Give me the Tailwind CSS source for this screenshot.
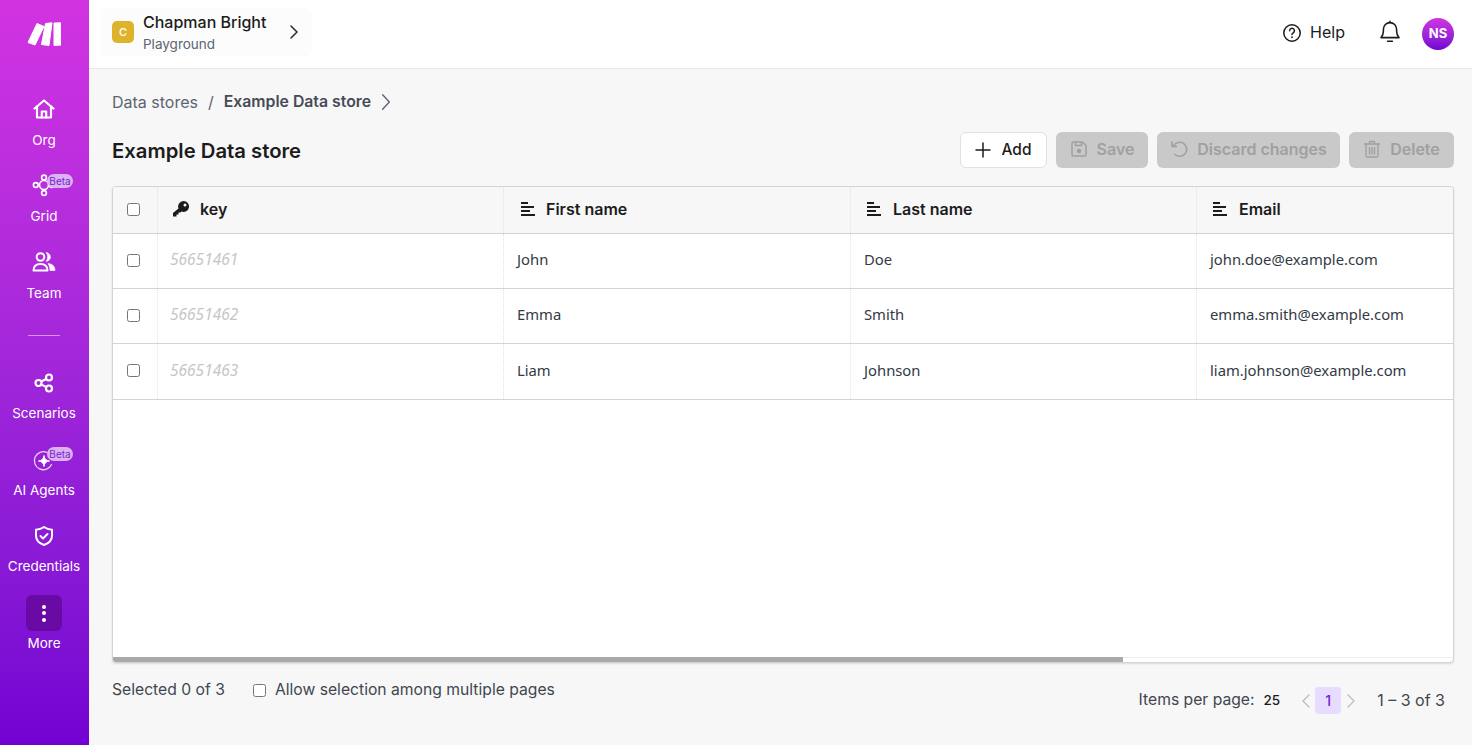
<!DOCTYPE html>
<html lang="en">
<head>
    <meta charset="UTF-8">
    <title>Example Data store</title>
    <script src="https://cdn.jsdelivr.net/npm/@tailwindcss/browser@4"></script>
</head>
<body class="font-['Inter',sans-serif] bg-[#f7f7f7] text-[#1c1c1c] h-[745px] w-[1472px] overflow-hidden">
<div class="flex h-[745px]">
    <!-- Sidebar -->
    <aside class="w-[89px] shrink-0 pr-px bg-gradient-to-b from-[#d233e1] to-[#7300d1] text-white text-[13.5px] flex flex-col items-stretch">
        <div class="h-[91.5px] flex justify-center pt-[22px]">
            <svg width="34" height="24" viewBox="0 0 34 24" fill="#fff" stroke="#fff" stroke-width="1" stroke-linejoin="round">
                <polygon points="1,20.5 10,1.5 17,4.5 8,23" />
                <polygon points="14.5,22.5 18.5,1.5 25,0.8 22,23.5" />
                <polygon points="27,1 33.5,0.8 34,23 27,23.5" />
            </svg>
        </div>
        <a class="h-[76.5px] pt-[5px] flex flex-col items-center">
            <svg class="w-6 h-6" viewBox="0 0 24 24" fill="none" stroke="#fff" stroke-width="2.200" stroke-linejoin="round" stroke-linecap="round"><path d="M2.500 11.500 12 3.500l9.500 8" /><path d="M5 9.500V20.500h14V9.500" /><path d="M9.800 20.500v-6h4.400v6" /></svg>
            <span class="mt-[9px] leading-5">Org</span>
        </a>
        <a class="relative h-[76.5px] pt-[5px] flex flex-col items-center">
            <svg class="w-6 h-6" viewBox="0 0 24 24" fill="none" stroke="#fff" stroke-width="1.600"><circle cx="12" cy="12" r="4.500" /><circle cx="12" cy="4.500" r="2.400" /><circle cx="3.800" cy="12" r="2.400" /><circle cx="12" cy="20" r="2.400" /><circle cx="20" cy="12" r="2.400" /></svg>
            <span class="absolute left-[47px] top-[6px] h-[14px] w-[26px] rounded-full bg-[#dcb2f0] text-[#7a22d0] text-[10px] leading-[14px] text-center">Beta</span>
            <span class="mt-[9px] leading-5">Grid</span>
        </a>
        <a class="h-[76.5px] pt-[5px] flex flex-col items-center">
            <svg class="w-6 h-6" viewBox="0 0 24 24" fill="none"><circle cx="8.500" cy="7" r="3.800" stroke="#fff" stroke-width="2" /><path d="M14 2.600a4.400 4.400 0 0 1 0 8.800 6.500 6.500 0 0 0 0-8.800z" fill="#fff" stroke="#fff" stroke-width=".6" /><path d="M1.500 20.500c0-4.300 3-6.500 7-6.500s7 2.200 7 6.500z" stroke="#fff" stroke-width="2" stroke-linejoin="round" /><path d="M16 13.500c4.300.3 7 2.900 7 7h-5c0-2.800-.8-5.100-2-7z" fill="#fff" stroke="#fff" stroke-width=".6" stroke-linejoin="round" /></svg>
            <span class="mt-[9px] leading-5">Team</span>
        </a>
        <div class="h-[44.5px] pt-[13.5px] flex justify-center"><div class="w-8 h-px bg-white/50"></div></div>
        <a class="h-[76.5px] pt-[5px] flex flex-col items-center">
            <svg class="w-6 h-6" viewBox="0 0 24 24" fill="none" stroke="#fff" stroke-width="2.200"><circle cx="6.500" cy="12" r="3" /><circle cx="17" cy="6.500" r="3" /><circle cx="17" cy="17.500" r="3" /><path d="M9.200 10.600 14.300 8M9.200 13.400l5.100 2.700" /></svg>
            <span class="mt-[8px] leading-5">Scenarios</span>
        </a>
        <a class="relative h-[76.5px] pt-[5px] flex flex-col items-center">
            <svg class="w-6 h-6 mt-[1.500px]" viewBox="0 0 24 24" fill="none"><path d="M19.500 15.500A9 9 0 1 1 15 3.500" stroke="#fff" stroke-opacity=".8" stroke-width="1.300" stroke-linecap="round" /><path d="M12 6.500c.5 3.500 2 5 5.500 5.500-3.500.5-5 2-5.500 5.500-.5-3.500-2-5-5.500-5.500 3.500-.5 5-2 5.500-5.500z" fill="#fff" stroke="#fff" stroke-linejoin="round" /></svg>
            <span class="absolute left-[47px] top-[5px] h-[14px] w-[26px] rounded-full bg-[#dcb2f0] text-[#7a22d0] text-[10px] leading-[14px] text-center">Beta</span>
            <span class="mt-[7.500px] leading-5">AI Agents</span>
        </a>
        <a class="h-[76.5px] pt-[5px] flex flex-col items-center">
            <svg class="w-6 h-6" viewBox="0 0 24 24" fill="none" stroke="#fff" stroke-width="2" stroke-linejoin="round" stroke-linecap="round"><path d="M12 3c2.500 1.800 5 2.500 8 2.700v6c0 4.500-3 7.500-8 9.300-5-1.800-8-4.800-8-9.300v-6C7 5.500 9.500 4.800 12 3z" /><path d="m8.500 12 2.500 2.500 4.500-4.500" /></svg>
            <span class="mt-[8px] leading-5">Credentials</span>
        </a>
        <a class="flex flex-col items-center">
            <div class="w-9 h-9 rounded-md bg-[#6a0aa5] flex flex-col items-center justify-center gap-[2.500px]">
                <span class="w-1 h-1 rounded-full bg-white"></span>
                <span class="w-1 h-1 rounded-full bg-white"></span>
                <span class="w-1 h-1 rounded-full bg-white"></span>
            </div>
            <span class="mt-[2px] leading-5">More</span>
        </a>
    </aside>

    <div class="flex-1 min-w-0 flex flex-col">
        <!-- Top bar -->
        <header class="h-[69px] shrink-0 bg-white border-b border-[#e8e9ec] flex items-center justify-between pl-[11px] pr-[18px]">
            <div class="h-[48px] w-[212px] rounded-md bg-[#fcfcfc] flex items-center pl-[12px] relative -top-[2px]">
                <div class="w-[22px] h-[22px] rounded-[5px] bg-[#dfb22c] text-white text-[11px] font-medium flex items-center justify-center">C</div>
                <div class="ml-[9px] w-[143px] pt-[1px]">
                    <div class="text-[16px] font-medium leading-5">Chapman Bright</div>
                    <div class="text-[13.500px] text-[#5b6472] leading-5 mt-[2px]">Playground</div>
                </div>
                <svg class="w-4 h-4" viewBox="0 0 16 16" fill="none" stroke="#1f2937" stroke-width="1.500" stroke-linecap="round" stroke-linejoin="round"><path d="m5 2 6 6-6 6" /></svg>
            </div>
            <div class="flex items-center">
                <svg class="w-[20px] h-[20px] -mt-[3px]" viewBox="0 0 20 20" fill="none" stroke="#1c1c1c" stroke-width="1.500" stroke-linecap="round"><circle cx="10" cy="10" r="8.200" /><path d="M7.600 7.800a2.400 2.400 0 1 1 3.700 2c-.8.500-1.300.9-1.300 1.800" /><path d="M10 14.200v.1" stroke-width="1.800" /></svg>
                <span class="ml-[8px] -mt-[4px] text-[16px] text-[#1c1c1c]">Help</span>
                <svg class="ml-[33px] -mt-[6px] w-6 h-6" viewBox="0 0 20 20" fill="none" stroke="#1c1c1c" stroke-width="1.300" stroke-linejoin="round" stroke-linecap="round"><path d="M2.500 15.500c1.500-1.500 2-3 2-5.500v-1.500a5.500 5.500 0 0 1 11 0V10c0 2.500.5 4 2 5.500z" /><path d="M8 18.500h4" /><path d="M10 2v1" /></svg>
                <div class="ml-[20px] w-8 h-8 rounded-full bg-gradient-to-b from-[#d233e1] to-[#7300d1] text-white text-[13px] font-bold flex items-center justify-center">NS</div>
            </div>
        </header>

        <!-- Content -->
        <main class="flex-1 min-h-0 pl-[23px] pr-[18px] flex flex-col">
            <nav class="h-[20px] mt-[23px] flex items-center text-[16px] text-[#5b6472]">
                <span>Data stores</span>
                <span class="mx-[10px]">/</span>
                <span class="text-[15.800px] font-semibold text-[#454b54]">Example Data store</span>
                <svg class="ml-[6px] w-[18px] h-[18px]" viewBox="0 0 16 16" fill="none" stroke="#5b6472" stroke-width="1.200" stroke-linecap="round" stroke-linejoin="round"><path d="m5 1.500 6 6.500-6 6.500" /></svg>
            </nav>
            <div class="mt-[20px] h-[54px] flex items-start justify-between">
                <h1 class="text-[20.300px] font-semibold leading-[38px] text-[#1c1c1c]">Example Data store</h1>
                <div class="flex items-center gap-[9px] h-9">
                    <button class="h-9 w-[87px] pb-px rounded-md bg-white border border-[#dfe1e5] flex items-center justify-center text-[15.500px] font-medium text-[#1c1c1c]">
                        <svg class="w-4 h-4 mr-[10px]" viewBox="0 0 16 16" fill="none" stroke="#1c1c1c" stroke-width="1.500" stroke-linecap="round"><path d="M8 1v14M1 8h14" /></svg>Add
                    </button>
                    <button class="h-9 w-[92px] pb-[2px] rounded-md bg-[#c9c9c9] flex items-center justify-center text-[16px] font-semibold text-[#a0a0a0]">
                        <svg class="w-[18px] h-[18px] mr-[9px]" viewBox="0 0 18 18" fill="none" stroke="#a0a0a0" stroke-width="1.500" stroke-linejoin="round"><path d="M2 3.500A1.500 1.500 0 0 1 3.500 2h9L16 5.500v9a1.500 1.500 0 0 1-1.500 1.500h-11A1.500 1.500 0 0 1 2 14.500z" /><path d="M5.500 2v3.500h6V2" /><circle cx="9" cy="11" r="1.500" fill="#a0a0a0" /></svg>Save
                    </button>
                    <button class="h-9 w-[183px] pb-[2px] rounded-md bg-[#c9c9c9] flex items-center justify-center text-[16px] font-semibold text-[#a0a0a0]">
                        <svg class="w-[18px] h-[18px] mr-[9px]" viewBox="0 0 18 18" fill="none" stroke="#a0a0a0" stroke-width="1.600" stroke-linecap="round" stroke-linejoin="round"><path d="M3.500 6A7 7 0 1 1 5 14.500" /><path d="M2 2v4.500h4.500" /></svg>Discard changes
                    </button>
                    <button class="h-9 w-[105px] pb-[2px] rounded-md bg-[#c9c9c9] flex items-center justify-center text-[16px] font-semibold text-[#a0a0a0]">
                        <svg class="w-[18px] h-[18px] mr-[9px]" viewBox="0 0 18 18" fill="none" stroke="#a0a0a0" stroke-width="1.400" stroke-linecap="round" stroke-linejoin="round"><path d="M1.500 4h15M6.500 4V1.500h5V4" /><path d="M3 4v12a1 1 0 0 0 1 1h10a1 1 0 0 0 1-1V4" /><path d="M6.500 7.500v6.500M9 7.500v6.500M11.500 7.500v6.500" /></svg>Delete
                    </button>
                </div>
            </div>

            <!-- Table -->
            <div class="relative h-[477px] rounded-[4px] border border-[#d4d4d4] bg-white overflow-hidden shadow-[0_1px_2px_rgba(0,0,0,0.12)]">
                <div class="grid grid-cols-[45px_346px_347px_346px_1fr] h-[47px] bg-[#f7f7f7] border-b border-[#d4d4d4] text-[16px] font-semibold text-[#1c1c1c]">
                    <div class="border-r border-[#ececec] flex items-center pl-[14px] pb-[2px]"><span class="w-[13px] h-[13px] rounded-[2.500px] border border-[#767676] bg-white"></span></div>
                    <div class="border-r border-[#ececec] flex items-center pl-[14px] pb-[2px]">
                        <svg class="w-[18px] h-[18px] mr-[10px]" viewBox="0 0 18 18" fill="#1c1c1c"><path d="M11.500 1a5.500 5.500 0 1 1-2 10.600L8.500 12.500H6.500V14.500H4.500V16.500H1V13L6.500 8.500A5.500 5.500 0 0 1 11.500 1zM13 3.500a1.500 1.500 0 1 0 0 3 1.500 1.500 0 0 0 0-3z" fill-rule="evenodd" /></svg>key
                    </div>
                    <div class="border-r border-[#ececec] flex items-center pl-[16px] pb-[2px]">
                        <svg class="w-[16px] h-[16px] mr-[10px]" viewBox="0 0 16 16" fill="none" stroke="#1c1c1c" stroke-width="1.900"><path d="M1 2h7M1 6h13M1 10h9M1 14h14" /></svg>First name
                    </div>
                    <div class="border-r border-[#ececec] flex items-center pl-[15px] pb-[2px]">
                        <svg class="w-[16px] h-[16px] mr-[11px]" viewBox="0 0 16 16" fill="none" stroke="#1c1c1c" stroke-width="1.900"><path d="M1 2h7M1 6h13M1 10h9M1 14h14" /></svg>Last name
                    </div>
                    <div class="flex items-center pl-[15px] pb-[2px]">
                        <svg class="w-[16px] h-[16px] mr-[11px]" viewBox="0 0 16 16" fill="none" stroke="#1c1c1c" stroke-width="1.900"><path d="M1 2h7M1 6h13M1 10h9M1 14h14" /></svg>Email
                    </div>
                </div>
                <div class="grid grid-cols-[45px_346px_347px_346px_1fr] h-[55px] border-b border-[#d4d4d4] font-['Noto_Sans',sans-serif] text-[14.800px] text-[#333a44]">
                    <div class="border-r border-dotted border-[#e2e2e2] flex items-center pl-[14px] pb-[2px]"><span class="w-[13px] h-[13px] rounded-[2.500px] border border-[#767676] bg-white"></span></div>
                    <div class="border-r border-dotted border-[#e2e2e2] flex items-center pl-[12px] pb-[2px] italic text-[15.500px] text-[#c6c6c6]">56651461</div>
                    <div class="border-r border-dotted border-[#e2e2e2] flex items-center pl-[13px] pb-[3px]">John</div>
                    <div class="border-r border-dotted border-[#e2e2e2] flex items-center pl-[13px] pb-[3px]">Doe</div>
                    <div class="flex items-center pl-[13px] pb-[3px]">john.doe@example.com</div>
                </div>
                <div class="grid grid-cols-[45px_346px_347px_346px_1fr] h-[55px] border-b border-[#d4d4d4] font-['Noto_Sans',sans-serif] text-[14.800px] text-[#333a44]">
                    <div class="border-r border-dotted border-[#e2e2e2] flex items-center pl-[14px] pb-[2px]"><span class="w-[13px] h-[13px] rounded-[2.500px] border border-[#767676] bg-white"></span></div>
                    <div class="border-r border-dotted border-[#e2e2e2] flex items-center pl-[12px] pb-[2px] italic text-[15.500px] text-[#c6c6c6]">56651462</div>
                    <div class="border-r border-dotted border-[#e2e2e2] flex items-center pl-[13px] pb-[3px]">Emma</div>
                    <div class="border-r border-dotted border-[#e2e2e2] flex items-center pl-[13px] pb-[3px]">Smith</div>
                    <div class="flex items-center pl-[13px] pb-[3px]">emma.smith@example.com</div>
                </div>
                <div class="grid grid-cols-[45px_346px_347px_346px_1fr] h-[56px] border-b border-[#d4d4d4] font-['Noto_Sans',sans-serif] text-[14.800px] text-[#333a44]">
                    <div class="border-r border-dotted border-[#e2e2e2] flex items-center pl-[14px] pb-[2px]"><span class="w-[13px] h-[13px] rounded-[2.500px] border border-[#767676] bg-white"></span></div>
                    <div class="border-r border-dotted border-[#e2e2e2] flex items-center pl-[12px] pb-[2px] italic text-[15.500px] text-[#c6c6c6]">56651463</div>
                    <div class="border-r border-dotted border-[#e2e2e2] flex items-center pl-[13px] pb-[2px]">Liam</div>
                    <div class="border-r border-dotted border-[#e2e2e2] flex items-center pl-[13px] pb-[2px]">Johnson</div>
                    <div class="flex items-center pl-[13px] pb-[2px]">liam.johnson@example.com</div>
                </div>
                <!-- Scrollbar -->
                <div class="absolute left-0 right-0 bottom-0 h-[5px] border-t border-[#ececec]">
                    <div class="h-[5px] w-[1010px] bg-[#a9a9a9] -mt-px"></div>
                </div>
            </div>

            <!-- Footer -->
            <div class="flex justify-between">
                <div class="flex items-center h-5 mt-[17px] text-[15.700px] text-[#3f4650]">
                    <span>Selected 0 of 3</span>
                    <span class="ml-[28px] w-[13px] h-[13px] rounded-[2.500px] border border-[#767676] bg-white"></span>
                    <span class="ml-[9px]">Allow selection among multiple pages</span>
                </div>
                <div class="flex items-center h-[27px] mt-[24px] pr-[9px] text-[15.700px] text-[#3f4650]">
                    <span class="-mt-[2px]">Items per page:</span>
                    <span class="ml-[9px] -mt-[1px] text-[13.500px] font-medium text-[#1c1c1c]">25</span>
                    <svg class="ml-[20px] w-[12px] h-[16px]" viewBox="0 0 12 16" fill="none" stroke="#bcbcbc" stroke-width="1.300" stroke-linecap="round" stroke-linejoin="round"><path d="M9 2 3 8l6 6" /></svg>
                    <span class="ml-[3px] w-[26px] h-[27px] rounded-[4px] bg-[#e6dcff] text-[#7a22d0] text-[14px] font-medium flex items-center justify-center">1</span>
                    <svg class="ml-[4px] w-[12px] h-[16px]" viewBox="0 0 12 16" fill="none" stroke="#bcbcbc" stroke-width="1.300" stroke-linecap="round" stroke-linejoin="round"><path d="m3 2 6 6-6 6" /></svg>
                    <span class="ml-[20px] -mt-[2px] text-[16px]">1 – 3 of 3</span>
                </div>
            </div>
        </main>
    </div>
</div>
</body>
</html>
